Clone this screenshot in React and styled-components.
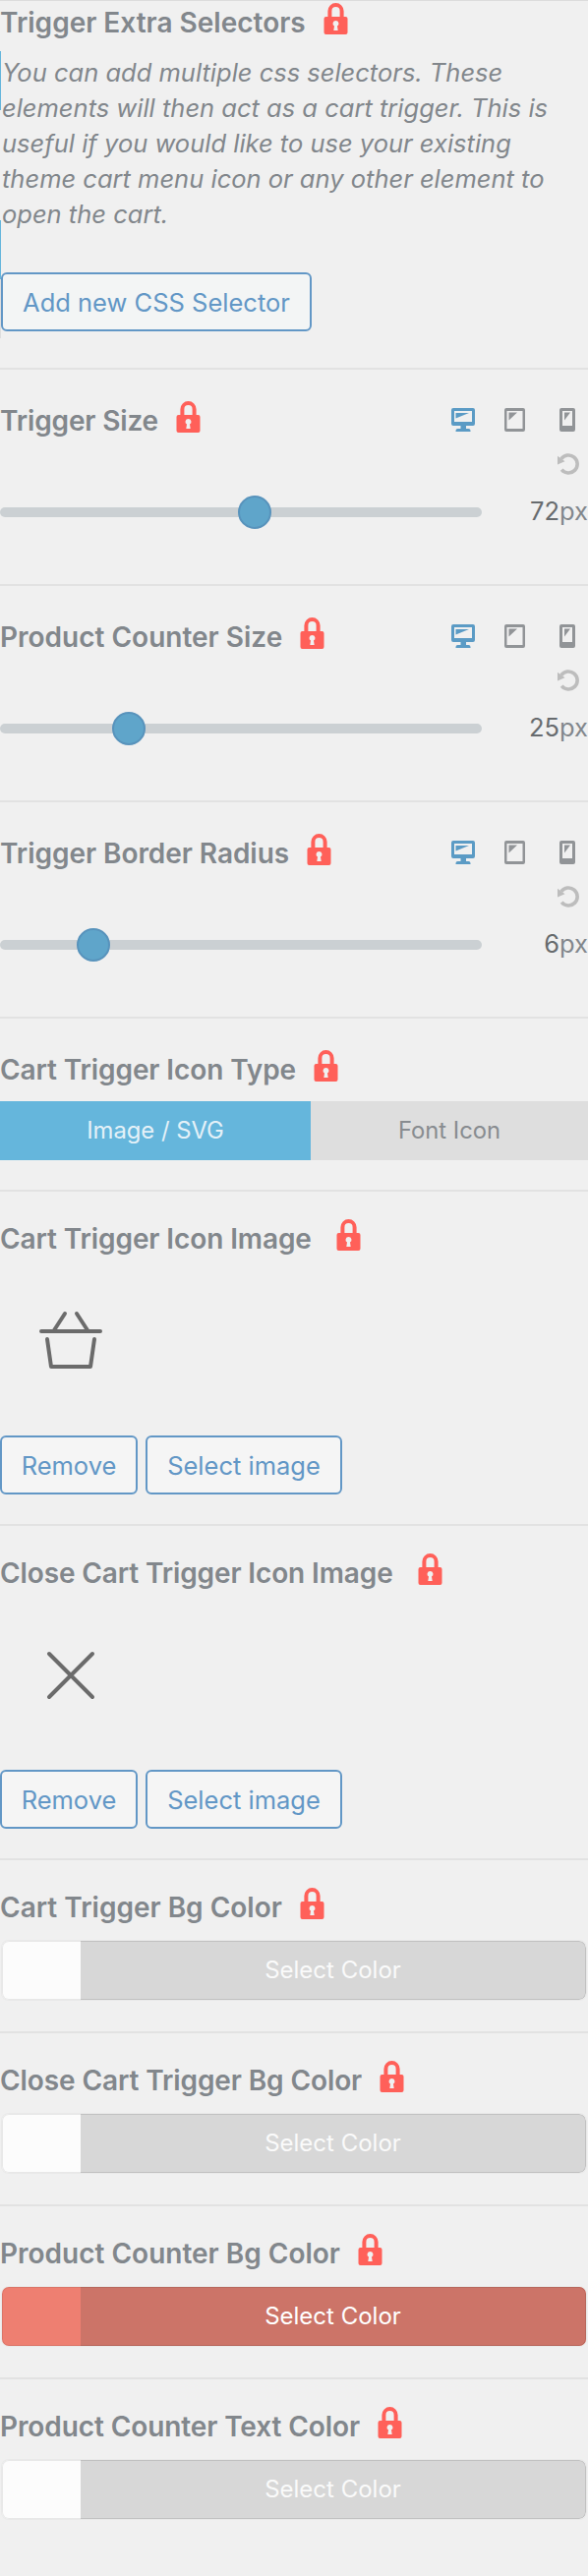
import React from "react";
import styled, { createGlobalStyle } from "styled-components";

const GlobalStyle = createGlobalStyle`
  *, *::before, *::after { box-sizing: border-box; }
  body {
    margin: 0;
    background: #f0f0f0;
    font-family: Inter, "Liberation Sans", sans-serif;
    color: #82878c;
  }
`;

const Panel = styled.main`
  width: 598px;
  height: 2620px;
  overflow: hidden;
  background: #f0f0f0;
`;

const Section = styled.section`
  height: ${(p) => p.$height}px;
  padding-top: ${(p) => p.$top ?? 28}px;
  border-top: 2px solid #e2e2e2;
`;

const IntroSection = styled.section`
  height: 374px;
  padding-top: 2px;
  border-top: 1px solid #dcdcdc;
`;

const Header = styled.header`
  display: flex;
  height: 32px;
  justify-content: space-between;
`;

const Heading = styled.h3`
  display: flex;
  margin: 0;
  gap: ${(p) => p.$gap ?? 18}px;
  font-size: 28px;
  font-weight: 600;
  line-height: 40px;
  white-space: pre;
`;

const Label = styled.span`
  letter-spacing: ${(p) => p.$spacing ?? 0}px;
`;

const IntroBody = styled.div`
  height: 292px;
  margin-top: 17px;
  padding: 4px 0 0 1px;
  background: linear-gradient(
      #65b6dc 60px,
      transparent 60px 172px,
      #65b6dc 172px 232px,
      #dedede 232px
    )
    left / 1px 100% no-repeat;
`;

const Description = styled.p`
  height: 221px;
  margin: 0;
  padding-left: 1px;
  font-size: 25.5px;
  font-style: italic;
  line-height: 36px;
  white-space: nowrap;
`;

const Line = styled.span`
  display: block;
`;

const Button = styled.button`
  display: block;
  width: ${(p) => p.$width}px;
  height: 60px;
  padding: 1px 0 0;
  border: 2px solid #6297c6;
  border-radius: 6px;
  background: ${(p) => p.$bg ?? "#f5f5f5"};
  color: #6297c6;
  font: 400 25.5px/54px Inter, "Liberation Sans", sans-serif;
  white-space: nowrap;
`;

const ButtonRow = styled.div`
  display: flex;
  gap: 8px;
`;

const Devices = styled.div`
  display: flex;
  padding: 7px 9px 0 0;
  gap: 29px;
  align-items: flex-start;
`;

const DeviceIcon = styled.svg`
  width: 24px;
  height: 24px;
  fill: ${(p) => (p.$active ? "#5b9bc5" : "#919497")};
`;

const ResetRow = styled.div`
  display: flex;
  justify-content: flex-end;
  padding: 21px 9px 0 0;
`;

const SliderRow = styled.div`
  display: flex;
  align-items: center;
  justify-content: space-between;
  height: 34px;
  margin-top: 20px;
`;

const Track = styled.div`
  width: 490px;
  height: 10px;
  border-radius: 5px;
  background: #cbd0d3;
`;

const Thumb = styled.div`
  width: 34px;
  height: 34px;
  margin-left: ${(p) => p.$start}px;
  transform: translateY(-12px);
  border: 2px solid #5893bc;
  border-radius: 50%;
  background: #5fa5ca;
`;

const Value = styled.div`
  padding-bottom: 2px;
  font-size: 25.5px;
  line-height: 34px;
`;

const Digits = styled.span`
  color: #676b6e;
`;

const Segmented = styled.div`
  display: grid;
  grid-template-columns: 316px 1fr;
  height: 60px;
  margin-top: 20px;
`;

const Segment = styled.div`
  background: ${(p) => (p.$active ? "#65b6dc" : "#dedede")};
  color: ${(p) => (p.$active ? "#e4f1f8" : "#888c90")};
  font-size: 23.8px;
  line-height: 59px;
  text-align: center;
`;

const Preview = styled.div`
  height: 144px;
  margin: 21px 0 23px;
  padding-top: 23px;
`;

const PreviewIcon = styled.svg`
  display: block;
  width: 96px;
  height: 96px;
  margin-left: 24px;
  fill: none;
  stroke: #6b6b6b;
  stroke-width: 4;
  stroke-linecap: round;
  stroke-linejoin: round;
`;

const ColorButton = styled.div`
  display: grid;
  grid-template-columns: 80px 1fr;
  height: 60px;
  margin: 22px 2px 0;
  overflow: hidden;
  border-radius: 7px;
  background: ${(p) => p.$color};
  box-shadow: 0 0 1px 1px rgba(0, 0, 0, 0.03);
`;

const Swatch = styled.div`
  border: 1px solid rgba(0, 0, 0, 0.08);
  border-right: 0;
  border-radius: 7px 0 0 7px;
`;

const ColorText = styled.div`
  border: 1px solid rgba(0, 0, 0, 0.1);
  border-left: 0;
  border-radius: 0 7px 7px 0;
  background: ${(p) => p.$color};
  color: ${(p) => p.$text};
  font-size: 24px;
  line-height: 57px;
  text-align: center;
`;

const Lock = () => (
  <svg width="25" height="32" viewBox="0 0 25 32" aria-hidden="true">
    <path fill="none" stroke="#ff6059" strokeWidth="4" d="M6.4 15V8.2a6.1 6.1 0 0 1 12.2 0V15" />
    <path
      fill="#ff6059"
      fillRule="evenodd"
      d="M2.5 14h20a2 2 0 0 1 2 2v14a2 2 0 0 1-2 2h-20a2 2 0 0 1-2-2V16a2 2 0 0 1 2-2Zm10 4a3 3 0 0 0-1.5 5.6L10.3 28h4.4L14 23.6A3 3 0 0 0 12.5 18Z"
    />
  </svg>
);

const Undo = () => (
  <svg width="22" height="23" viewBox="0 0 22 23" aria-hidden="true">
    <path fill="none" stroke="#bdbdbd" strokeWidth="3.6" d="M3.8 5.8A9 9 0 1 1 4.2 16.7" />
    <path fill="#bdbdbd" d="M0 2.8V11.4L7.5 8.2Z" />
  </svg>
);

const Title = ({ children, gap, spacing }) => (
  <Heading $gap={gap}>
    <Label $spacing={spacing}>{children}</Label>
    <Lock />
  </Heading>
);

const DeviceSwitch = () => (
  <Devices>
    <DeviceIcon $active viewBox="0 0 24 24">
      <path
        fillRule="evenodd"
        d="M2 0h20a2 2 0 0 1 2 2v14a2 2 0 0 1-2 2h-7v3h2.5a2 2 0 0 1 2 2v1h-15v-1a2 2 0 0 1 2-2H9.500v-3H2a2 2 0 0 1-2-2V2a2 2 0 0 1 2-2Zm1 3v11h18V3Z"
      />
      <path d="M4.5 5H18L4.5 10.5Z" />
    </DeviceIcon>
    <DeviceIcon viewBox="0 0 24 24">
      <path
        fillRule="evenodd"
        d="M3 0h17a2 2 0 0 1 2 2v20a2 2 0 0 1-2 2H3a2 2 0 0 1-2-2V2a2 2 0 0 1 2-2Zm.5 3v18h16V3Z"
      />
      <path d="M5.5 4.500h8.500L5.5 12.500Z" />
    </DeviceIcon>
    <DeviceIcon viewBox="0 0 24 24">
      <path
        fillRule="evenodd"
        d="M6 0h12a2 2 0 0 1 2 2v20a2 2 0 0 1-2 2H6a2 2 0 0 1-2-2V2a2 2 0 0 1 2-2Zm1 3v15h10V3Z"
      />
      <path d="M9 4.5h6L9 12.5Z" />
    </DeviceIcon>
  </Devices>
);

const SliderSection = ({ label, spacing, value, start }) => (
  <Section $height={220} $top={32}>
    <Header>
      <Title spacing={spacing}>{label}</Title>
      <DeviceSwitch />
    </Header>
    <ResetRow>
      <Undo />
    </ResetRow>
    <SliderRow>
      <Track>
        <Thumb $start={start} />
      </Track>
      <Value>
        <Digits>{value}</Digits>px
      </Value>
    </SliderRow>
  </Section>
);

const ImageSection = ({ label, spacing, children }) => (
  <Section $height={340}>
    <Header>
      <Title gap={25} spacing={spacing}>{label}</Title>
    </Header>
    <Preview>
      <PreviewIcon viewBox="0 0 96 96">{children}</PreviewIcon>
    </Preview>
    <ButtonRow>
      <Button $width={140}>Remove</Button>
      <Button $width={200}>Select image</Button>
    </ButtonRow>
  </Section>
);

const ColorSection = ({ label, spacing, color = "#fcfcfc", dark = "#d7d7d7", text = "#fafafa" }) => (
  <Section $height={176}>
    <Header>
      <Title spacing={spacing}>{label}</Title>
    </Header>
    <ColorButton $color={color}>
      <Swatch />
      <ColorText $color={dark} $text={text}>Select Color</ColorText>
    </ColorButton>
  </Section>
);

export default function App() {
  return (
    <Panel>
      <GlobalStyle />
      <IntroSection>
        <Header>
          <Title>Trigger Extra Selectors</Title>
        </Header>
        <IntroBody>
          <Description>
            <Line>You can add multiple css selectors. These</Line>
            <Line>elements will then act as a cart trigger. This is</Line>
            <Line>useful if you would like to use your existing</Line>
            <Line>theme cart menu icon or any other element to</Line>
            <Line>open the cart.</Line>
          </Description>
          <Button $width={316} $bg="#f3f5f5">Add new CSS Selector</Button>
        </IntroBody>
      </IntroSection>
      <SliderSection label="Trigger Size" spacing={-0.15} value="72" start={242} />
      <SliderSection label="Product Counter Size" value="25" start={114} />
      <SliderSection label="Trigger Border Radius" spacing={-0.05} value="6" start={78} />
      <Section $height={176} $top={32}>
        <Header>
          <Title spacing={-0.1}>Cart Trigger Icon Type</Title>
        </Header>
        <Segmented>
          <Segment $active>Image / SVG</Segment>
          <Segment>Font Icon</Segment>
        </Segmented>
      </Section>
      <ImageSection label="Cart Trigger Icon Image" spacing={-0.1}>
        <path d="M18 38H78M31 37L42 20M65 37L54 20M24 46L28 74H68L72 46" />
      </ImageSection>
      <ImageSection label="Close Cart Trigger Icon Image" spacing={-0.12}>
        <path d="M26 26L70 70M70 26L26 70" />
      </ImageSection>
      <ColorSection label="Cart Trigger Bg Color" />
      <ColorSection label="Close Cart Trigger Bg Color" spacing={-0.1} />
      <ColorSection label="Product Counter Bg Color" color="#ee7f71" dark="#cc7468" text="#ffffff" />
      <ColorSection label="Product Counter Text Color" spacing={-0.1} />
    </Panel>
  );
}
